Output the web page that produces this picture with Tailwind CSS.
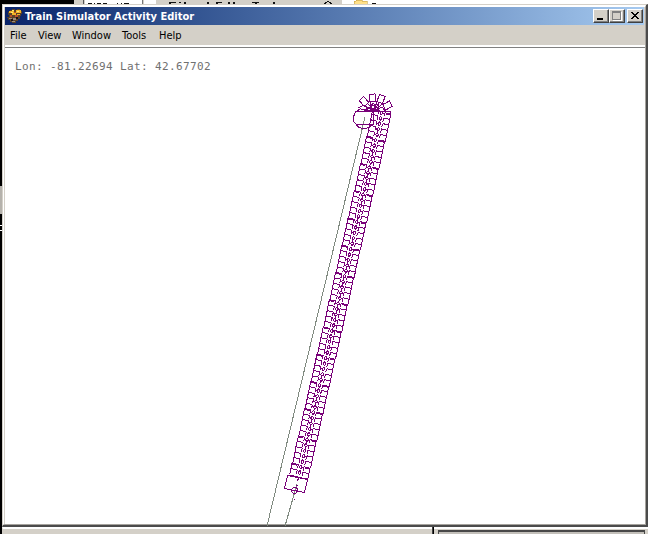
<!DOCTYPE html>
<html lang="en">
<head>
<meta charset="utf-8">
<title>Train Simulator Activity Editor</title>
<script src="https://cdn.jsdelivr.net/npm/@tailwindcss/browser@4"></script>
</head>
<body class="w-[648px] h-[534px] overflow-hidden bg-black font-['DejaVu_Sans_Condensed','DejaVu_Sans',sans-serif]">
<div class="relative w-[648px] h-[534px] overflow-hidden flex flex-col">
  <!-- slivers of the windows behind -->
  <svg class="block shrink-0" width="648" height="4" shape-rendering="crispEdges">
    <rect width="648" height="4" fill="#000"/>
    <rect x="74" width="268" height="4" fill="#d4d0c8"/>
    <rect x="83" width="1" height="4" fill="#555"/><rect x="85" width="58" height="4" fill="#fff"/>
    <rect x="144" width="12" height="4" fill="#fff"/><rect x="142" width="1" height="4" fill="#777"/>
    <rect x="342" width="306" height="4" fill="#fff"/>
    <path d="M88 3h4M94 3h1M97 3h4M103 3h4M117 3h1M121 3h1M124 3h5M169 2h7M169 3h2M179 2h2M184 2h2M184 3h2M207 2h2M207 3h2M216 2h6M216 3h2M228 2h2M228 3h2M233 2h2M233 3h2M252 2h7M255 3h2M273 2h2M273 3h2M324 3h2M330 3h2M325 2h2M329 2h2M327 1h2M372 3h4" stroke="#111" transform="translate(0,.5)"/>
    <path d="M354 4V1h2V0h6v1h5v3z" fill="#ffe08a" stroke="#c9a54a" stroke-width=".6"/>
  </svg>
  <div class="flex flex-1 min-h-0">
    <div class="w-[2px] bg-black shrink-0"></div>
    <main class="w-[646px] h-[523px] flex flex-col bg-[#d4d0c8] border-t border-l border-t-[#d4d0c8] border-l-[#d4d0c8] border-r-2 border-r-[#4b4b4b] border-b-2 border-b-[#4b4b4b]">
      <div class="flex flex-col flex-1 border-t-2 border-l border-white border-r border-r-[#a5a29d] border-b border-b-[#a5a29d] pl-px">
        <header class="h-[18px] shrink-0 flex items-center bg-linear-to-r from-[#0a246a] to-[#a6caf0] pl-[2px] pr-px mr-px">
          <svg width="16" height="16" viewBox="0 0 16 16" class="shrink-0" shape-rendering="crispEdges">
            <path d="M3 2h2V1h3v1h2V1h3v2h2v3h-1v2h-1v3h-2v2h-2v2H5v-1H3v-2H1v-2H0V9h2V7H1V4h2z" fill="#5a4228"/>
            <path d="M2 3h5v2H2zM9 2h5v3H9zM5 5h4v2H5zM10 6h3v1h-3z" fill="#f0b429"/>
            <path d="M5 2h2v1H5zM10 3h2v1h-2zM4 4h2v1H4z" fill="#ffe96a"/>
            <path d="M7 4h2v1H7zM3 7h2v2H3zM8 7h3v2H8z" fill="#b8502a"/>
            <path d="M2 10h3v1H2zM6 10h3v2H6zM5 13h3v1H5z" fill="#9a8b7b"/>
            <path d="M4 11h2v2H4zM9 9h2v2H9z" fill="#17121a"/>
          </svg>
          <h1 class="ml-[2px] text-[11px] leading-[18px] font-bold text-white whitespace-nowrap tracking-[0.02px] relative top-px">Train Simulator Activity Editor</h1>
          <div class="ml-auto flex">
            <button class="w-4 h-[14px] bg-[#d4d0c8] border border-white border-r-[#404040] border-b-[#404040] shadow-[inset_-1px_-1px_#808080]"><svg width="14" height="12" shape-rendering="crispEdges"><path d="M3 8h6v2H3z"/></svg></button>
            <button class="w-4 h-[14px] bg-[#d4d0c8] border border-white border-r-[#404040] border-b-[#404040] shadow-[inset_-1px_-1px_#808080]"><svg width="14" height="12" shape-rendering="crispEdges"><path d="M3 2h9v9H3z" fill="#fff"/><path d="M2 1h9v9H2zM3 3v6h7V3z" fill="#808080" fill-rule="evenodd"/><path d="M3 3h7v6H3z" fill="#d4d0c8"/></svg></button>
            <button class="ml-[2px] w-4 h-[14px] bg-[#d4d0c8] border border-white border-r-[#404040] border-b-[#404040] shadow-[inset_-1px_-1px_#808080]"><svg width="14" height="12" shape-rendering="crispEdges"><path d="M3 2h2v1h1v1h2V3h1V2h2v1h-1v1H9v1H8v1h1v1h1v1h1v1H9V8H8V7H6v1H5v1H3V8h1V7h1V6h1V5H5V4H4V3H3z"/></svg></button>
          </div>
        </header>
        <nav class="h-[20px] shrink-0 flex pl-[5px] text-[11px] leading-[21px] text-black">
          <span class="w-[28px]">File</span><span class="w-[34px]">View</span><span class="w-[50px]">Window</span><span class="w-[37px]">Tools</span><span>Help</span>
        </nav>
        <section class="relative flex-1 bg-white border-t-2 border-white">
          <div class="h-px bg-[#808080]"></div>
          <p class="absolute left-[10px] top-[13px] text-[11px] leading-[14px] tracking-[0.38px] whitespace-pre text-[#707070] font-['DejaVu_Sans_Mono',monospace]">Lon: -81.22694 Lat: 42.67702</p>
          <svg class="absolute left-0 top-[2px]" width="638" height="477" viewBox="5 49 638 477" fill="none">
            <g stroke="#808a80" stroke-width="1" shape-rendering="crispEdges">
              <path d="M365 117L267 526M297 484L285 526"/>
            </g>
            <g id="track" stroke="#780078" stroke-width="1" shape-rendering="crispEdges"></g>
          </svg>
        </section>
      </div>
    </main>
  </div>
  <!-- top edge of the windows below -->
  <footer class="h-[7px] shrink-0 flex pl-[2px] bg-black">
    <div class="w-[430px] bg-[#d4d0c8] border-t-2 border-t-white border-l border-l-[#d4d0c8]"></div>
    <div class="w-[1px] bg-[#404040]"></div>
    <div class="flex-1 ml-px bg-[#d4d0c8] border-t-2 border-white pl-[4px] pr-[3px] pt-px"><div class="h-[4px] bg-[#c3c0ba] border-t-2 border-x border-[#484848]"></div></div>
  </footer>
  <div class="absolute left-0 top-[186px] w-[2px] h-[28px] bg-[#b5b2ac]"></div>
  <div class="absolute left-0 top-[225px] w-[2px] h-px bg-white"></div>
  <div class="absolute left-0 top-[230px] w-[2px] h-px bg-white"></div>
</div>
<script>
const NS = 'http://www.w3.org/2000/svg', track = document.getElementById('track');
function add(tag, attrs) {
  const e = document.createElementNS(NS, tag);
  for (const k in attrs) e.setAttribute(k, attrs[k]);
  track.appendChild(e);
}
// Main run: paired boxes either side of a chain of small nodes.
const start = [382.3, 111], end = [299, 476], count = 67;
for (let i = 0; i < count; i++) {
  const t = i / count, jog = ((i % 5) - 2) * 0.12;
  const x = start[0] + (end[0] - start[0]) * t + jog, y = start[1] + (end[1] - start[1]) * t;
  const place = `translate(${x.toFixed(1)} ${y.toFixed(1)}) rotate(12.9)`;
  add('path', { d: 'M-3 0H-9.3V5.8M9.3 6.8V1H3', transform: place });
  add('path', { d: 'M-3 0V4M3 1V5M-1.5 2L0 0L1.5 2L0 4Z', transform: place });
  if (i % 5 === 0) add('path', { d: 'M-9 1H-4M4 2H9', transform: place });
}
add('path', { d: 'M-9 0H9', transform: 'translate(298 477) rotate(12.9)' });
// Fan of boxes around the upper loop.
for (const [x, y, a] of [[364,101.5,-42],[372.5,98,-8],[381,99,20],[387.5,105.5,60]])
  add('rect', { x: -3, y: -3.8, width: 6, height: 7.6, transform: `translate(${x} ${y}) rotate(${a})` });
for (const d of ['M358 108L364 105L369 109L373 103L377 108L384 103','M358 111H391','M368 104L374 110L379 103L377 112','M364 111L369 107L373 112L382 107L386 112','M361 109L368 110','M391 111L390 117','M370 101L371 106M377 102L375 107'])
  add('path', { d });
for (const [x, y] of [[373,107],[377,109]]) add('circle', { cx: x, cy: y, r: 2 });
// Start marker: a chamfered box with the circle's lower arc showing below it.
add('path', { d: 'M355.5 111.5L373.5 110.5V124.5H356.5L353.5 121.5V117Z' });
add('path', { d: 'M354 122L359 127.5L364 129L369 127.5L374 123M357 111L361 108.5' });
// Lower end marker.
add('path', { d: 'M287.5 475.5L307.5 479.5L304.5 492.5L284.5 488.5Z' });
add('path', { d: 'M293.5 487.5H296L297.5 489V491L295.5 493.5H293.5L291.5 491.5V489.5Z' });
add('path', { d: 'M294 499.5h1M363 149.5h1M297 481l2 -3M296 485l2 1' });
</script>
</body>
</html>
